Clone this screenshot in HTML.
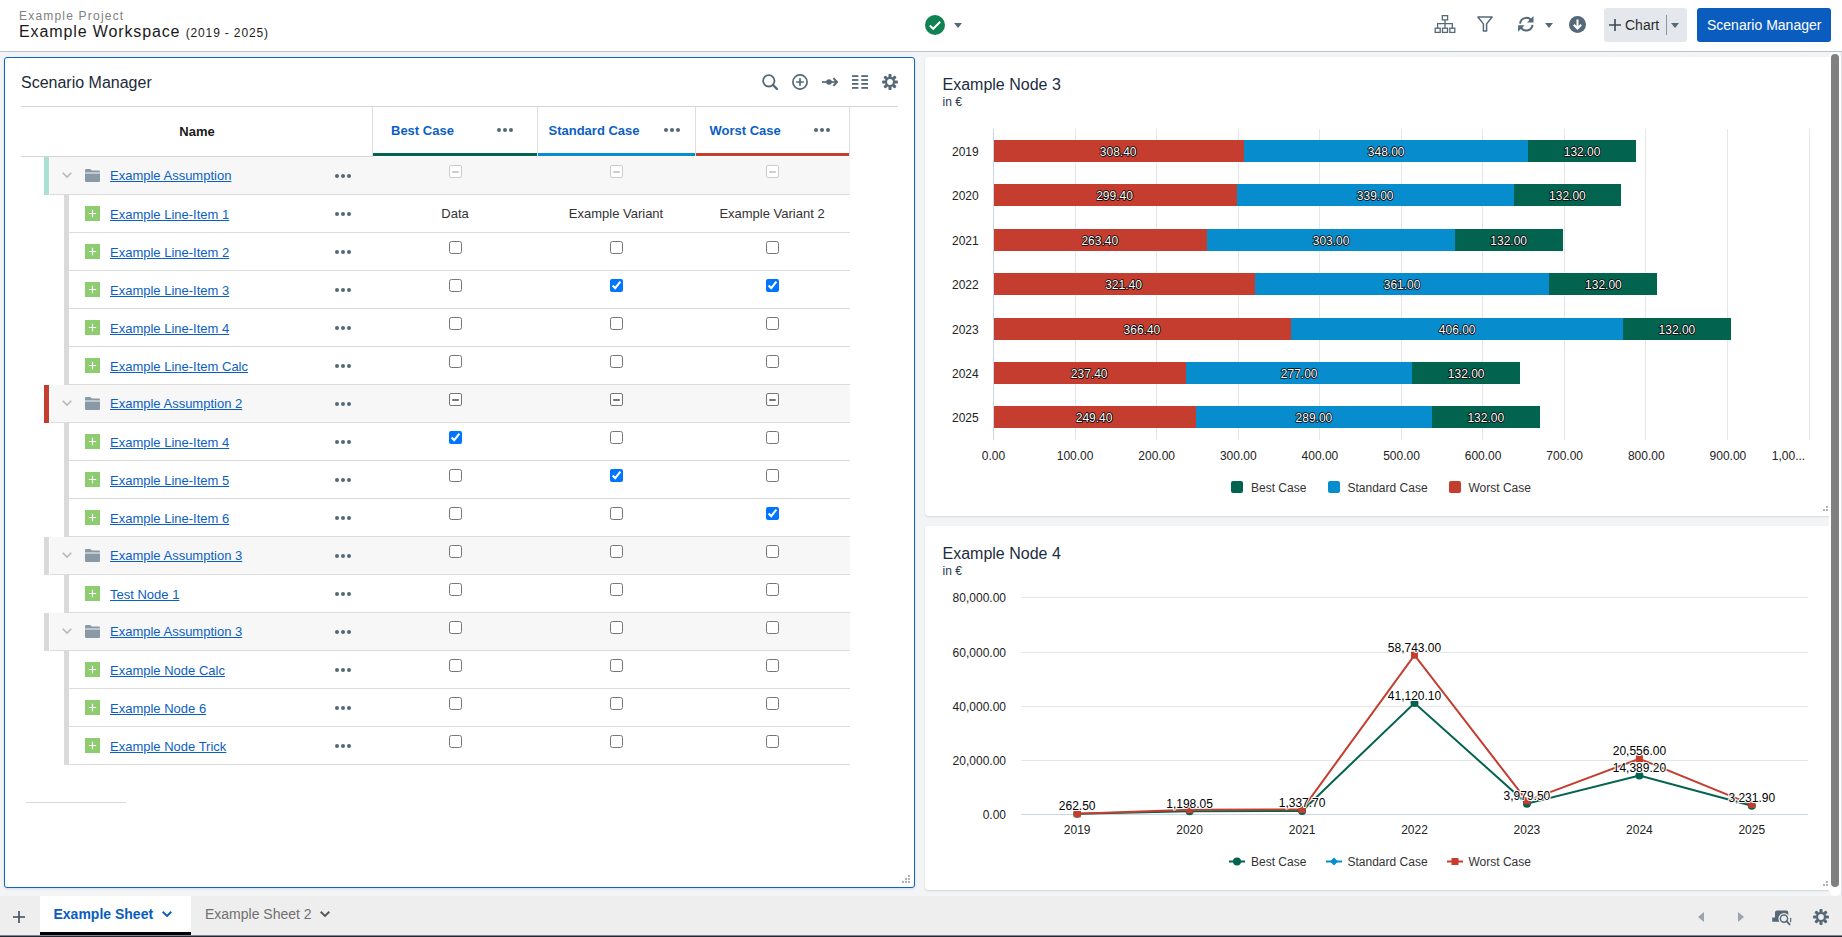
<!DOCTYPE html>
<html><head><meta charset="utf-8">
<style>
*{box-sizing:border-box}
html,body{margin:0;padding:0}
body{width:1842px;height:937px;overflow:hidden;position:relative;background:#f3f4f6;font-family:"Liberation Sans",sans-serif;color:#333}
.a{position:absolute}
.t{position:absolute;white-space:nowrap;line-height:1}
.lnk{color:#0b5fc4;text-decoration:underline;font-size:13px}
.dots{position:absolute;width:16px;height:4px}
.dots i{position:absolute;top:0;width:4px;height:4px;border-radius:50%;background:#546878}
.cb{position:absolute;margin:0;width:13px;height:13px}
.ind{position:absolute;width:13px;height:13px;border:1px solid #767676;border-radius:2px;background:#fff}
.ind:after{content:"";position:absolute;left:2px;top:4.5px;width:7px;height:2px;background:#767676;border-radius:1px}
.ind.dis{border-color:#cdcdcd}
.ind.dis:after{background:#cdcdcd}
svg{position:absolute;overflow:visible}
</style></head><body>

<div class="a" style="left:0;top:0;width:1842px;height:51px;background:#fff"></div>
<div class="a" style="left:0;top:51px;width:1842px;height:1px;background:#b9c2cb"></div>
<div class="t" style="left:19px;top:10px;font-size:12px;letter-spacing:1.2px;color:#808080">Example Project</div>
<div class="t" style="left:19px;top:24px;font-size:16px;letter-spacing:0.88px;color:#1a1a1a">Example Workspace <span style="font-size:12px;letter-spacing:0.85px">(2019 - 2025)</span></div>
<svg style="left:925px;top:15px" width="20" height="20" viewBox="0 0 20 20"><circle cx="10" cy="10" r="10" fill="#0e8250"/><path d="M4.8 10.6 L8.2 13.8 L15.2 6.8" stroke="#fff" stroke-width="2" fill="none"/></svg>
<svg style="left:954px;top:23px" width="8" height="5" viewBox="0 0 8 5"><path d="M0 0H8L4 5Z" fill="#546878"/></svg>
<svg style="left:1434px;top:15px" width="22" height="19" viewBox="0 0 22 19" fill="none" stroke="#546878" stroke-width="1.3"><rect x="8.3" y="0.65" width="5.3" height="4.2" /><path d="M11 4.9V13 M3.6 13V8.6H18.3V13"/><rect x="1.2" y="13.2" width="5" height="4.2"/><rect x="8.5" y="13.2" width="5" height="4.2"/><rect x="15.8" y="13.2" width="5" height="4.2"/></svg>
<svg style="left:1477px;top:16px" width="16" height="16" viewBox="0 0 16 16" fill="none" stroke="#546878" stroke-width="1.5" stroke-linejoin="round"><path d="M0.9 1H15.1L9.6 7.9V15H6.4V7.9Z"/></svg>
<svg style="left:1517px;top:15px" width="18" height="18" viewBox="0 0 18 18" fill="none" stroke="#546878" stroke-width="2"><path d="M3.1 8.6A6.2 6.2 0 0 1 14.4 5.6"/><path d="M15.5 9.9A6.2 6.2 0 0 1 4.2 12.8"/><path d="M16.5 1.1V7.6H10Z" fill="#546878" stroke="none"/><path d="M1.1 16.8V10.3H7.6Z" fill="#546878" stroke="none"/></svg>
<svg style="left:1545px;top:23px" width="8" height="5" viewBox="0 0 8 5"><path d="M0 0H8L4 5Z" fill="#546878"/></svg>
<svg style="left:1569px;top:16px" width="17" height="17" viewBox="0 0 17 17"><circle cx="8.5" cy="8.5" r="8.5" fill="#546878"/><path d="M8.5 3.5V12.5 M4.8 8.8L8.5 12.5L12.2 8.8" stroke="#fff" stroke-width="2" fill="none"/></svg>
<div class="a" style="left:1604px;top:8px;width:83px;height:34px;background:#e4e8ec;border-radius:3px"></div>
<svg style="left:1609px;top:19px" width="12" height="12" viewBox="0 0 12 12"><path d="M6 0V12M0 6H12" stroke="#3a4a58" stroke-width="1.6"/></svg>
<div class="t" style="left:1625px;top:17.5px;font-size:14px;color:#2b2b2b">Chart</div>
<div class="a" style="left:1666px;top:15px;width:1px;height:20px;background:#8a96a0"></div>
<svg style="left:1671px;top:23px" width="8" height="5" viewBox="0 0 8 5"><path d="M0 0H8L4 5Z" fill="#546878"/></svg>
<div class="a" style="left:1697px;top:8px;width:134px;height:34px;background:#0b5cbf;border-radius:3px"></div>
<div class="t" style="left:1707px;top:17.5px;font-size:14px;color:#fff">Scenario Manager</div>
<div class="a" style="left:4px;top:57px;width:911px;height:831px;background:#fff;border:1px solid #0d64c8;border-radius:3px;box-shadow:0 1px 3px rgba(0,0,0,0.10)"></div>
<div class="t" style="left:21px;top:75px;font-size:16px;color:#1b2a3a">Scenario Manager</div>
<svg style="left:762px;top:74px" width="16" height="16" viewBox="0 0 16 16" fill="none" stroke="#546878"><circle cx="6.8" cy="6.8" r="5.7" stroke-width="1.8"/><path d="M11 11L15 15" stroke-width="2.4" stroke-linecap="round"/></svg>
<svg style="left:792px;top:74px" width="16" height="16" viewBox="0 0 16 16" fill="none" stroke="#546878"><circle cx="8" cy="8" r="7.1" stroke-width="1.7"/><path d="M8 4.2V11.8M4.2 8H11.8" stroke-width="1.7"/></svg>
<svg style="left:822px;top:77px" width="16" height="10" viewBox="0 0 16 10" fill="none" stroke="#546878"><path d="M0 5H14" stroke-width="1.7"/><circle cx="7" cy="5" r="2.8" fill="#546878" stroke="none"/><path d="M11.4 1.1L15 5L11.4 8.9" stroke-width="2"/></svg>
<svg style="left:852px;top:75px" width="16" height="14" viewBox="0 0 16 14" fill="#546878"><rect x="0" y="0.2" width="6.4" height="1.8"/><rect x="9.3" y="0.2" width="6.7" height="1.8"/><rect x="0" y="4.1" width="6.4" height="1.8"/><rect x="9.3" y="4.1" width="6.7" height="1.8"/><rect x="0" y="8.0" width="6.4" height="1.8"/><rect x="9.3" y="8.0" width="6.7" height="1.8"/><rect x="0" y="12.0" width="6.4" height="1.8"/><rect x="9.3" y="12.0" width="6.7" height="1.8"/></svg>
<svg style="left:882px;top:74px" width="16" height="16" viewBox="0 0 16 16"><circle cx="8" cy="8" r="3.9" fill="none" stroke="#546878" stroke-width="2.0"/><rect x="6.45" y="0.1" width="3.1" height="4.4" rx="0.9" fill="#546878" transform="rotate(0 8 8)"/><rect x="6.45" y="0.1" width="3.1" height="4.4" rx="0.9" fill="#546878" transform="rotate(45 8 8)"/><rect x="6.45" y="0.1" width="3.1" height="4.4" rx="0.9" fill="#546878" transform="rotate(90 8 8)"/><rect x="6.45" y="0.1" width="3.1" height="4.4" rx="0.9" fill="#546878" transform="rotate(135 8 8)"/><rect x="6.45" y="0.1" width="3.1" height="4.4" rx="0.9" fill="#546878" transform="rotate(180 8 8)"/><rect x="6.45" y="0.1" width="3.1" height="4.4" rx="0.9" fill="#546878" transform="rotate(225 8 8)"/><rect x="6.45" y="0.1" width="3.1" height="4.4" rx="0.9" fill="#546878" transform="rotate(270 8 8)"/><rect x="6.45" y="0.1" width="3.1" height="4.4" rx="0.9" fill="#546878" transform="rotate(315 8 8)"/></svg>
<div class="a" style="left:21px;top:106px;width:877px;height:1px;background:#d5d5d5"></div>
<div class="a" style="left:21px;top:156px;width:352px;height:1px;background:#d5d5d5"></div>
<div class="a" style="left:372px;top:107px;width:1px;height:49px;background:#dedede"></div>
<div class="a" style="left:373px;top:153px;width:164px;height:3px;background:#02634f"></div>
<div class="t" style="left:391px;top:124px;font-size:13px;font-weight:bold;color:#0b5fc4">Best Case</div>
<div class="dots" style="left:497px;top:128px"><i style="left:0"></i><i style="left:6px"></i><i style="left:12px"></i></div>
<div class="a" style="left:537px;top:107px;width:1px;height:49px;background:#dedede"></div>
<div class="a" style="left:538px;top:153px;width:157px;height:3px;background:#078ccd"></div>
<div class="t" style="left:548.5px;top:124px;font-size:13px;font-weight:bold;color:#0b5fc4">Standard Case</div>
<div class="dots" style="left:664px;top:128px"><i style="left:0"></i><i style="left:6px"></i><i style="left:12px"></i></div>
<div class="a" style="left:695px;top:107px;width:1px;height:49px;background:#dedede"></div>
<div class="a" style="left:696px;top:153px;width:153px;height:3px;background:#c43d2e"></div>
<div class="t" style="left:709.5px;top:124px;font-size:13px;font-weight:bold;color:#0b5fc4">Worst Case</div>
<div class="dots" style="left:814px;top:128px"><i style="left:0"></i><i style="left:6px"></i><i style="left:12px"></i></div>
<div class="a" style="left:849px;top:107px;width:1px;height:49px;background:#dedede"></div>
<div class="t" style="left:179.3px;top:125px;font-size:13px;font-weight:bold;color:#1a1a1a">Name</div>
<div class="a" style="left:50px;top:157px;width:800px;height:37px;background:#f7f7f7"></div>
<div class="a" style="left:44px;top:157px;width:5px;height:38px;background:#abe0d6"></div>
<div class="a" style="left:50px;top:194px;width:800px;height:1px;background:#dcdcdc"></div>
<svg style="left:62px;top:172px" width="10" height="6" viewBox="0 0 10 6"><path d="M0.7 0.7L5 5L9.3 0.7" stroke="#b9b9b9" stroke-width="1.6" fill="none"/></svg>
<svg style="left:85px;top:169px" width="15" height="13" viewBox="0 0 15 13"><path d="M0 1.2Q0 0 1.2 0H5.2L6.8 1.6H13.8Q15 1.6 15 2.8V3.4H0Z M0 4.6H15V11.8Q15 13 13.8 13H1.2Q0 13 0 11.8Z" fill="#8999a6"/></svg>
<div class="t lnk" style="left:110px;top:168.6px">Example Assumption</div>
<div class="dots" style="left:335px;top:174px"><i style="left:0"></i><i style="left:6px"></i><i style="left:12px"></i></div>
<div class="ind dis" style="left:449px;top:165px"></div>
<div class="ind dis" style="left:610px;top:165px"></div>
<div class="ind dis" style="left:766px;top:165px"></div>
<div class="a" style="left:64px;top:195px;width:5px;height:38px;background:#dadada"></div>
<div class="a" style="left:69px;top:232px;width:781px;height:1px;background:#dcdcdc"></div>
<div class="a" style="left:85px;top:206px;width:15px;height:15px;background:#8dcd70"></div>
<svg style="left:85px;top:206px" width="15" height="15" viewBox="0 0 15 15"><path d="M7.5 3.8V11.2M3.8 7.5H11.2" stroke="#fff" stroke-width="1.2"/></svg>
<div class="t lnk" style="left:110px;top:208.2px">Example Line-Item 1</div>
<div class="dots" style="left:335px;top:212px"><i style="left:0"></i><i style="left:6px"></i><i style="left:12px"></i></div>
<div class="t" style="left:455px;top:206.8px;width:0;font-size:13px;color:#333;display:flex;justify-content:center">Data</div>
<div class="t" style="left:616px;top:206.8px;width:0;font-size:13px;color:#333;display:flex;justify-content:center">Example Variant</div>
<div class="t" style="left:772px;top:206.8px;width:0;font-size:13px;color:#333;display:flex;justify-content:center">Example Variant 2</div>
<div class="a" style="left:64px;top:233px;width:5px;height:38px;background:#dadada"></div>
<div class="a" style="left:69px;top:270px;width:781px;height:1px;background:#dcdcdc"></div>
<div class="a" style="left:85px;top:244px;width:15px;height:15px;background:#8dcd70"></div>
<svg style="left:85px;top:244px" width="15" height="15" viewBox="0 0 15 15"><path d="M7.5 3.8V11.2M3.8 7.5H11.2" stroke="#fff" stroke-width="1.2"/></svg>
<div class="t lnk" style="left:110px;top:246.2px">Example Line-Item 2</div>
<div class="dots" style="left:335px;top:250px"><i style="left:0"></i><i style="left:6px"></i><i style="left:12px"></i></div>
<input type="checkbox" class="cb" style="left:449px;top:241px">
<input type="checkbox" class="cb" style="left:610px;top:241px">
<input type="checkbox" class="cb" style="left:766px;top:241px">
<div class="a" style="left:64px;top:271px;width:5px;height:38px;background:#dadada"></div>
<div class="a" style="left:69px;top:308px;width:781px;height:1px;background:#dcdcdc"></div>
<div class="a" style="left:85px;top:282px;width:15px;height:15px;background:#8dcd70"></div>
<svg style="left:85px;top:282px" width="15" height="15" viewBox="0 0 15 15"><path d="M7.5 3.8V11.2M3.8 7.5H11.2" stroke="#fff" stroke-width="1.2"/></svg>
<div class="t lnk" style="left:110px;top:284.2px">Example Line-Item 3</div>
<div class="dots" style="left:335px;top:288px"><i style="left:0"></i><i style="left:6px"></i><i style="left:12px"></i></div>
<input type="checkbox" class="cb" style="left:449px;top:279px">
<input type="checkbox" class="cb" style="left:610px;top:279px" checked>
<input type="checkbox" class="cb" style="left:766px;top:279px" checked>
<div class="a" style="left:64px;top:309px;width:5px;height:38px;background:#dadada"></div>
<div class="a" style="left:69px;top:346px;width:781px;height:1px;background:#dcdcdc"></div>
<div class="a" style="left:85px;top:320px;width:15px;height:15px;background:#8dcd70"></div>
<svg style="left:85px;top:320px" width="15" height="15" viewBox="0 0 15 15"><path d="M7.5 3.8V11.2M3.8 7.5H11.2" stroke="#fff" stroke-width="1.2"/></svg>
<div class="t lnk" style="left:110px;top:322.2px">Example Line-Item 4</div>
<div class="dots" style="left:335px;top:326px"><i style="left:0"></i><i style="left:6px"></i><i style="left:12px"></i></div>
<input type="checkbox" class="cb" style="left:449px;top:317px">
<input type="checkbox" class="cb" style="left:610px;top:317px">
<input type="checkbox" class="cb" style="left:766px;top:317px">
<div class="a" style="left:64px;top:347px;width:5px;height:38px;background:#dadada"></div>
<div class="a" style="left:69px;top:384px;width:781px;height:1px;background:#dcdcdc"></div>
<div class="a" style="left:85px;top:358px;width:15px;height:15px;background:#8dcd70"></div>
<svg style="left:85px;top:358px" width="15" height="15" viewBox="0 0 15 15"><path d="M7.5 3.8V11.2M3.8 7.5H11.2" stroke="#fff" stroke-width="1.2"/></svg>
<div class="t lnk" style="left:110px;top:360.2px">Example Line-Item Calc</div>
<div class="dots" style="left:335px;top:364px"><i style="left:0"></i><i style="left:6px"></i><i style="left:12px"></i></div>
<input type="checkbox" class="cb" style="left:449px;top:355px">
<input type="checkbox" class="cb" style="left:610px;top:355px">
<input type="checkbox" class="cb" style="left:766px;top:355px">
<div class="a" style="left:50px;top:385px;width:800px;height:37px;background:#f7f7f7"></div>
<div class="a" style="left:44px;top:385px;width:5px;height:38px;background:#c43d2e"></div>
<div class="a" style="left:50px;top:422px;width:800px;height:1px;background:#dcdcdc"></div>
<svg style="left:62px;top:400px" width="10" height="6" viewBox="0 0 10 6"><path d="M0.7 0.7L5 5L9.3 0.7" stroke="#b9b9b9" stroke-width="1.6" fill="none"/></svg>
<svg style="left:85px;top:397px" width="15" height="13" viewBox="0 0 15 13"><path d="M0 1.2Q0 0 1.2 0H5.2L6.8 1.6H13.8Q15 1.6 15 2.8V3.4H0Z M0 4.6H15V11.8Q15 13 13.8 13H1.2Q0 13 0 11.8Z" fill="#8999a6"/></svg>
<div class="t lnk" style="left:110px;top:396.6px">Example Assumption 2</div>
<div class="dots" style="left:335px;top:402px"><i style="left:0"></i><i style="left:6px"></i><i style="left:12px"></i></div>
<div class="ind" style="left:449px;top:393px"></div>
<div class="ind" style="left:610px;top:393px"></div>
<div class="ind" style="left:766px;top:393px"></div>
<div class="a" style="left:64px;top:423px;width:5px;height:38px;background:#dadada"></div>
<div class="a" style="left:69px;top:460px;width:781px;height:1px;background:#dcdcdc"></div>
<div class="a" style="left:85px;top:434px;width:15px;height:15px;background:#8dcd70"></div>
<svg style="left:85px;top:434px" width="15" height="15" viewBox="0 0 15 15"><path d="M7.5 3.8V11.2M3.8 7.5H11.2" stroke="#fff" stroke-width="1.2"/></svg>
<div class="t lnk" style="left:110px;top:436.2px">Example Line-Item 4</div>
<div class="dots" style="left:335px;top:440px"><i style="left:0"></i><i style="left:6px"></i><i style="left:12px"></i></div>
<input type="checkbox" class="cb" style="left:449px;top:431px" checked>
<input type="checkbox" class="cb" style="left:610px;top:431px">
<input type="checkbox" class="cb" style="left:766px;top:431px">
<div class="a" style="left:64px;top:461px;width:5px;height:38px;background:#dadada"></div>
<div class="a" style="left:69px;top:498px;width:781px;height:1px;background:#dcdcdc"></div>
<div class="a" style="left:85px;top:472px;width:15px;height:15px;background:#8dcd70"></div>
<svg style="left:85px;top:472px" width="15" height="15" viewBox="0 0 15 15"><path d="M7.5 3.8V11.2M3.8 7.5H11.2" stroke="#fff" stroke-width="1.2"/></svg>
<div class="t lnk" style="left:110px;top:474.2px">Example Line-Item 5</div>
<div class="dots" style="left:335px;top:478px"><i style="left:0"></i><i style="left:6px"></i><i style="left:12px"></i></div>
<input type="checkbox" class="cb" style="left:449px;top:469px">
<input type="checkbox" class="cb" style="left:610px;top:469px" checked>
<input type="checkbox" class="cb" style="left:766px;top:469px">
<div class="a" style="left:64px;top:499px;width:5px;height:38px;background:#dadada"></div>
<div class="a" style="left:69px;top:536px;width:781px;height:1px;background:#dcdcdc"></div>
<div class="a" style="left:85px;top:510px;width:15px;height:15px;background:#8dcd70"></div>
<svg style="left:85px;top:510px" width="15" height="15" viewBox="0 0 15 15"><path d="M7.5 3.8V11.2M3.8 7.5H11.2" stroke="#fff" stroke-width="1.2"/></svg>
<div class="t lnk" style="left:110px;top:512.2px">Example Line-Item 6</div>
<div class="dots" style="left:335px;top:516px"><i style="left:0"></i><i style="left:6px"></i><i style="left:12px"></i></div>
<input type="checkbox" class="cb" style="left:449px;top:507px">
<input type="checkbox" class="cb" style="left:610px;top:507px">
<input type="checkbox" class="cb" style="left:766px;top:507px" checked>
<div class="a" style="left:50px;top:537px;width:800px;height:37px;background:#f7f7f7"></div>
<div class="a" style="left:44px;top:537px;width:5px;height:38px;background:#d9d9d9"></div>
<div class="a" style="left:50px;top:574px;width:800px;height:1px;background:#dcdcdc"></div>
<svg style="left:62px;top:552px" width="10" height="6" viewBox="0 0 10 6"><path d="M0.7 0.7L5 5L9.3 0.7" stroke="#b9b9b9" stroke-width="1.6" fill="none"/></svg>
<svg style="left:85px;top:549px" width="15" height="13" viewBox="0 0 15 13"><path d="M0 1.2Q0 0 1.2 0H5.2L6.8 1.6H13.8Q15 1.6 15 2.8V3.4H0Z M0 4.6H15V11.8Q15 13 13.8 13H1.2Q0 13 0 11.8Z" fill="#8999a6"/></svg>
<div class="t lnk" style="left:110px;top:548.6px">Example Assumption 3</div>
<div class="dots" style="left:335px;top:554px"><i style="left:0"></i><i style="left:6px"></i><i style="left:12px"></i></div>
<input type="checkbox" class="cb" style="left:449px;top:545px">
<input type="checkbox" class="cb" style="left:610px;top:545px">
<input type="checkbox" class="cb" style="left:766px;top:545px">
<div class="a" style="left:64px;top:575px;width:5px;height:38px;background:#dadada"></div>
<div class="a" style="left:69px;top:612px;width:781px;height:1px;background:#dcdcdc"></div>
<div class="a" style="left:85px;top:586px;width:15px;height:15px;background:#8dcd70"></div>
<svg style="left:85px;top:586px" width="15" height="15" viewBox="0 0 15 15"><path d="M7.5 3.8V11.2M3.8 7.5H11.2" stroke="#fff" stroke-width="1.2"/></svg>
<div class="t lnk" style="left:110px;top:588.2px">Test Node 1</div>
<div class="dots" style="left:335px;top:592px"><i style="left:0"></i><i style="left:6px"></i><i style="left:12px"></i></div>
<input type="checkbox" class="cb" style="left:449px;top:583px">
<input type="checkbox" class="cb" style="left:610px;top:583px">
<input type="checkbox" class="cb" style="left:766px;top:583px">
<div class="a" style="left:50px;top:613px;width:800px;height:37px;background:#f7f7f7"></div>
<div class="a" style="left:44px;top:613px;width:5px;height:38px;background:#d9d9d9"></div>
<div class="a" style="left:50px;top:650px;width:800px;height:1px;background:#dcdcdc"></div>
<svg style="left:62px;top:628px" width="10" height="6" viewBox="0 0 10 6"><path d="M0.7 0.7L5 5L9.3 0.7" stroke="#b9b9b9" stroke-width="1.6" fill="none"/></svg>
<svg style="left:85px;top:625px" width="15" height="13" viewBox="0 0 15 13"><path d="M0 1.2Q0 0 1.2 0H5.2L6.8 1.6H13.8Q15 1.6 15 2.8V3.4H0Z M0 4.6H15V11.8Q15 13 13.8 13H1.2Q0 13 0 11.8Z" fill="#8999a6"/></svg>
<div class="t lnk" style="left:110px;top:624.6px">Example Assumption 3</div>
<div class="dots" style="left:335px;top:630px"><i style="left:0"></i><i style="left:6px"></i><i style="left:12px"></i></div>
<input type="checkbox" class="cb" style="left:449px;top:621px">
<input type="checkbox" class="cb" style="left:610px;top:621px">
<input type="checkbox" class="cb" style="left:766px;top:621px">
<div class="a" style="left:64px;top:651px;width:5px;height:38px;background:#dadada"></div>
<div class="a" style="left:69px;top:688px;width:781px;height:1px;background:#dcdcdc"></div>
<div class="a" style="left:85px;top:662px;width:15px;height:15px;background:#8dcd70"></div>
<svg style="left:85px;top:662px" width="15" height="15" viewBox="0 0 15 15"><path d="M7.5 3.8V11.2M3.8 7.5H11.2" stroke="#fff" stroke-width="1.2"/></svg>
<div class="t lnk" style="left:110px;top:664.2px">Example Node Calc</div>
<div class="dots" style="left:335px;top:668px"><i style="left:0"></i><i style="left:6px"></i><i style="left:12px"></i></div>
<input type="checkbox" class="cb" style="left:449px;top:659px">
<input type="checkbox" class="cb" style="left:610px;top:659px">
<input type="checkbox" class="cb" style="left:766px;top:659px">
<div class="a" style="left:64px;top:689px;width:5px;height:38px;background:#dadada"></div>
<div class="a" style="left:69px;top:726px;width:781px;height:1px;background:#dcdcdc"></div>
<div class="a" style="left:85px;top:700px;width:15px;height:15px;background:#8dcd70"></div>
<svg style="left:85px;top:700px" width="15" height="15" viewBox="0 0 15 15"><path d="M7.5 3.8V11.2M3.8 7.5H11.2" stroke="#fff" stroke-width="1.2"/></svg>
<div class="t lnk" style="left:110px;top:702.2px">Example Node 6</div>
<div class="dots" style="left:335px;top:706px"><i style="left:0"></i><i style="left:6px"></i><i style="left:12px"></i></div>
<input type="checkbox" class="cb" style="left:449px;top:697px">
<input type="checkbox" class="cb" style="left:610px;top:697px">
<input type="checkbox" class="cb" style="left:766px;top:697px">
<div class="a" style="left:64px;top:727px;width:5px;height:38px;background:#dadada"></div>
<div class="a" style="left:69px;top:764px;width:781px;height:1px;background:#dcdcdc"></div>
<div class="a" style="left:85px;top:738px;width:15px;height:15px;background:#8dcd70"></div>
<svg style="left:85px;top:738px" width="15" height="15" viewBox="0 0 15 15"><path d="M7.5 3.8V11.2M3.8 7.5H11.2" stroke="#fff" stroke-width="1.2"/></svg>
<div class="t lnk" style="left:110px;top:740.2px">Example Node Trick</div>
<div class="dots" style="left:335px;top:744px"><i style="left:0"></i><i style="left:6px"></i><i style="left:12px"></i></div>
<input type="checkbox" class="cb" style="left:449px;top:735px">
<input type="checkbox" class="cb" style="left:610px;top:735px">
<input type="checkbox" class="cb" style="left:766px;top:735px">
<div class="a" style="left:26px;top:802px;width:100px;height:1px;background:#d8d8d8"></div>
<div class="a" style="left:902px;top:881px;width:2px;height:2px;background:#b3b3b3"></div><div class="a" style="left:905px;top:881px;width:2px;height:2px;background:#b3b3b3"></div><div class="a" style="left:908px;top:881px;width:2px;height:2px;background:#b3b3b3"></div><div class="a" style="left:905px;top:878px;width:2px;height:2px;background:#b3b3b3"></div><div class="a" style="left:908px;top:878px;width:2px;height:2px;background:#b3b3b3"></div><div class="a" style="left:908px;top:875px;width:2px;height:2px;background:#b3b3b3"></div>
<div class="a" style="left:925px;top:57px;width:912px;height:459px;background:#fff;border-radius:4px;box-shadow:0 1px 2px rgba(0,0,0,0.12)"></div>
<div class="a" style="left:925px;top:526px;width:912px;height:364px;background:#fff;border-radius:4px;box-shadow:0 1px 2px rgba(0,0,0,0.12)"></div>
<div class="a" style="left:1826px;top:506px;width:2px;height:2px;background:#b3b3b3"></div><div class="a" style="left:1823px;top:509px;width:2px;height:2px;background:#b3b3b3"></div><div class="a" style="left:1826px;top:509px;width:2px;height:2px;background:#b3b3b3"></div>
<div class="a" style="left:1826px;top:881px;width:2px;height:2px;background:#b3b3b3"></div><div class="a" style="left:1823px;top:884px;width:2px;height:2px;background:#b3b3b3"></div><div class="a" style="left:1826px;top:884px;width:2px;height:2px;background:#b3b3b3"></div>
<div class="t" style="left:942.5px;top:77.4px;font-size:16px;color:#1c2d40">Example Node 3</div>
<div class="t" style="left:942.5px;top:95.6px;font-size:12px;color:#2a3a4a">in €</div>
<div class="t" style="left:942.5px;top:546.4px;font-size:16px;color:#1c2d40">Example Node 4</div>
<div class="t" style="left:942.5px;top:565.2px;font-size:12px;color:#2a3a4a">in €</div>
<svg style="left:0;top:0" width="1842" height="937" viewBox="0 0 1842 937" font-family="Liberation Sans" font-size="12"><path d="M1075.5 129V440" stroke="#e6e6e6" stroke-width="1"/><path d="M1156.5 129V440" stroke="#e6e6e6" stroke-width="1"/><path d="M1238.5 129V440" stroke="#e6e6e6" stroke-width="1"/><path d="M1319.5 129V440" stroke="#e6e6e6" stroke-width="1"/><path d="M1401.5 129V440" stroke="#e6e6e6" stroke-width="1"/><path d="M1482.5 129V440" stroke="#e6e6e6" stroke-width="1"/><path d="M1564.5 129V440" stroke="#e6e6e6" stroke-width="1"/><path d="M1645.5 129V440" stroke="#e6e6e6" stroke-width="1"/><path d="M1727.5 129V440" stroke="#e6e6e6" stroke-width="1"/><path d="M1809.5 129V440" stroke="#e6e6e6" stroke-width="1"/><path d="M993.5 129V440" stroke="#ccd6eb" stroke-width="1"/><rect x="994" y="140" width="250" height="22" fill="#c43d2e"/><rect x="1244" y="140" width="284" height="22" fill="#078ccd"/><rect x="1528" y="140" width="108" height="22" fill="#02634f"/><text x="1118.2" y="156.3" text-anchor="middle" fill="#fff" stroke="#000" stroke-width="1.5" stroke-linejoin="round" paint-order="stroke">308.40</text><text x="1386.2" y="156.3" text-anchor="middle" fill="#fff" stroke="#000" stroke-width="1.5" stroke-linejoin="round" paint-order="stroke">348.00</text><text x="1582.1" y="156.3" text-anchor="middle" fill="#fff" stroke="#000" stroke-width="1.5" stroke-linejoin="round" paint-order="stroke">132.00</text><text x="978.7" y="155.7" text-anchor="end" fill="#222">2019</text><rect x="994" y="184" width="243" height="22" fill="#c43d2e"/><rect x="1237" y="184" width="277" height="22" fill="#078ccd"/><rect x="1514" y="184" width="107" height="22" fill="#02634f"/><text x="1114.5" y="200.3" text-anchor="middle" fill="#fff" stroke="#000" stroke-width="1.5" stroke-linejoin="round" paint-order="stroke">299.40</text><text x="1375.2" y="200.3" text-anchor="middle" fill="#fff" stroke="#000" stroke-width="1.5" stroke-linejoin="round" paint-order="stroke">339.00</text><text x="1567.4" y="200.3" text-anchor="middle" fill="#fff" stroke="#000" stroke-width="1.5" stroke-linejoin="round" paint-order="stroke">132.00</text><text x="978.7" y="199.7" text-anchor="end" fill="#222">2020</text><rect x="994" y="229" width="213" height="22" fill="#c43d2e"/><rect x="1207" y="229" width="248" height="22" fill="#078ccd"/><rect x="1455" y="229" width="108" height="22" fill="#02634f"/><text x="1099.8" y="245.3" text-anchor="middle" fill="#fff" stroke="#000" stroke-width="1.5" stroke-linejoin="round" paint-order="stroke">263.40</text><text x="1331.1" y="245.3" text-anchor="middle" fill="#fff" stroke="#000" stroke-width="1.5" stroke-linejoin="round" paint-order="stroke">303.00</text><text x="1508.7" y="245.3" text-anchor="middle" fill="#fff" stroke="#000" stroke-width="1.5" stroke-linejoin="round" paint-order="stroke">132.00</text><text x="978.7" y="244.7" text-anchor="end" fill="#222">2021</text><rect x="994" y="273" width="261" height="22" fill="#c43d2e"/><rect x="1255" y="273" width="294" height="22" fill="#078ccd"/><rect x="1549" y="273" width="108" height="22" fill="#02634f"/><text x="1123.5" y="289.3" text-anchor="middle" fill="#fff" stroke="#000" stroke-width="1.5" stroke-linejoin="round" paint-order="stroke">321.40</text><text x="1402.1" y="289.3" text-anchor="middle" fill="#fff" stroke="#000" stroke-width="1.5" stroke-linejoin="round" paint-order="stroke">361.00</text><text x="1603.4" y="289.3" text-anchor="middle" fill="#fff" stroke="#000" stroke-width="1.5" stroke-linejoin="round" paint-order="stroke">132.00</text><text x="978.7" y="288.7" text-anchor="end" fill="#222">2022</text><rect x="994" y="318" width="297" height="22" fill="#c43d2e"/><rect x="1291" y="318" width="332" height="22" fill="#078ccd"/><rect x="1623" y="318" width="108" height="22" fill="#02634f"/><text x="1141.9" y="334.3" text-anchor="middle" fill="#fff" stroke="#000" stroke-width="1.5" stroke-linejoin="round" paint-order="stroke">366.40</text><text x="1457.2" y="334.3" text-anchor="middle" fill="#fff" stroke="#000" stroke-width="1.5" stroke-linejoin="round" paint-order="stroke">406.00</text><text x="1676.9" y="334.3" text-anchor="middle" fill="#fff" stroke="#000" stroke-width="1.5" stroke-linejoin="round" paint-order="stroke">132.00</text><text x="978.7" y="333.7" text-anchor="end" fill="#222">2023</text><rect x="994" y="362" width="192" height="22" fill="#c43d2e"/><rect x="1186" y="362" width="226" height="22" fill="#078ccd"/><rect x="1412" y="362" width="108" height="22" fill="#02634f"/><text x="1089.2" y="378.3" text-anchor="middle" fill="#fff" stroke="#000" stroke-width="1.5" stroke-linejoin="round" paint-order="stroke">237.40</text><text x="1299.2" y="378.3" text-anchor="middle" fill="#fff" stroke="#000" stroke-width="1.5" stroke-linejoin="round" paint-order="stroke">277.00</text><text x="1466.2" y="378.3" text-anchor="middle" fill="#fff" stroke="#000" stroke-width="1.5" stroke-linejoin="round" paint-order="stroke">132.00</text><text x="978.7" y="377.7" text-anchor="end" fill="#222">2024</text><rect x="994" y="406" width="202" height="22" fill="#c43d2e"/><rect x="1196" y="406" width="236" height="22" fill="#078ccd"/><rect x="1432" y="406" width="108" height="22" fill="#02634f"/><text x="1094.1" y="422.3" text-anchor="middle" fill="#fff" stroke="#000" stroke-width="1.5" stroke-linejoin="round" paint-order="stroke">249.40</text><text x="1313.9" y="422.3" text-anchor="middle" fill="#fff" stroke="#000" stroke-width="1.5" stroke-linejoin="round" paint-order="stroke">289.00</text><text x="1485.8" y="422.3" text-anchor="middle" fill="#fff" stroke="#000" stroke-width="1.5" stroke-linejoin="round" paint-order="stroke">132.00</text><text x="978.7" y="421.7" text-anchor="end" fill="#222">2025</text><text x="993.5" y="459.8" text-anchor="middle" fill="#222">0.00</text><text x="1075.1" y="459.8" text-anchor="middle" fill="#222">100.00</text><text x="1156.7" y="459.8" text-anchor="middle" fill="#222">200.00</text><text x="1238.3" y="459.8" text-anchor="middle" fill="#222">300.00</text><text x="1319.9" y="459.8" text-anchor="middle" fill="#222">400.00</text><text x="1401.5" y="459.8" text-anchor="middle" fill="#222">500.00</text><text x="1483.1" y="459.8" text-anchor="middle" fill="#222">600.00</text><text x="1564.7" y="459.8" text-anchor="middle" fill="#222">700.00</text><text x="1646.3" y="459.8" text-anchor="middle" fill="#222">800.00</text><text x="1727.9" y="459.8" text-anchor="middle" fill="#222">900.00</text><text x="1805.2" y="459.8" text-anchor="end" fill="#222">1,00...</text><rect x="1231" y="481" width="12" height="12" rx="2" fill="#02634f"/><text x="1251" y="491.8" fill="#333">Best Case</text><rect x="1328" y="481" width="12" height="12" rx="2" fill="#078ccd"/><text x="1347.5" y="491.8" fill="#333">Standard Case</text><rect x="1449" y="481" width="12" height="12" rx="2" fill="#c43d2e"/><text x="1468.5" y="491.8" fill="#333">Worst Case</text><text x="1006" y="819.2" text-anchor="end" fill="#222">0.00</text><path d="M1021 760.5H1808" stroke="#e6e6e6"/><text x="1006" y="765.2" text-anchor="end" fill="#222">20,000.00</text><path d="M1021 706.5H1808" stroke="#e6e6e6"/><text x="1006" y="711.2" text-anchor="end" fill="#222">40,000.00</text><path d="M1021 652.5H1808" stroke="#e6e6e6"/><text x="1006" y="657.2" text-anchor="end" fill="#222">60,000.00</text><path d="M1021 597.5H1808" stroke="#e6e6e6"/><text x="1006" y="602.2" text-anchor="end" fill="#222">80,000.00</text><path d="M1021 814.5H1808" stroke="#ccd6eb"/><text x="1077.2" y="834" text-anchor="middle" fill="#222">2019</text><text x="1189.6" y="834" text-anchor="middle" fill="#222">2020</text><text x="1302.1" y="834" text-anchor="middle" fill="#222">2021</text><text x="1414.5" y="834" text-anchor="middle" fill="#222">2022</text><text x="1526.9" y="834" text-anchor="middle" fill="#222">2023</text><text x="1639.4" y="834" text-anchor="middle" fill="#222">2024</text><text x="1751.8" y="834" text-anchor="middle" fill="#222">2025</text><polyline points="1077.2,813.8 1189.6,811.3 1302.1,810.9 1414.5,703.0 1526.9,803.7 1639.4,775.5 1751.8,805.7" fill="none" stroke="#02634f" stroke-width="2"/><circle cx="1077.2" cy="813.8" r="4" fill="#02634f"/><circle cx="1189.6" cy="811.3" r="4" fill="#02634f"/><circle cx="1302.1" cy="810.9" r="4" fill="#02634f"/><circle cx="1414.5" cy="703.0" r="4" fill="#02634f"/><circle cx="1526.9" cy="803.7" r="4" fill="#02634f"/><circle cx="1639.4" cy="775.5" r="4" fill="#02634f"/><circle cx="1751.8" cy="805.7" r="4" fill="#02634f"/><polyline points="1077.2,813.8 1189.6,809.8 1302.1,809.5 1414.5,655.2 1526.9,800.9 1639.4,758.7 1751.8,804.6" fill="none" stroke="#c43d2e" stroke-width="2"/><rect x="1073.7" y="810.3" width="7" height="7" fill="#c43d2e"/><rect x="1186.1" y="806.3" width="7" height="7" fill="#c43d2e"/><rect x="1298.6" y="806.0" width="7" height="7" fill="#c43d2e"/><rect x="1411.0" y="651.7" width="7" height="7" fill="#c43d2e"/><rect x="1523.4" y="797.4" width="7" height="7" fill="#c43d2e"/><rect x="1635.9" y="755.2" width="7" height="7" fill="#c43d2e"/><rect x="1748.3" y="801.1" width="7" height="7" fill="#c43d2e"/><text x="1077.2" y="810.2" text-anchor="middle" fill="#000" stroke="#fff" stroke-width="2" stroke-linejoin="round" paint-order="stroke">262.50</text><text x="1189.6" y="807.9" text-anchor="middle" fill="#000" stroke="#fff" stroke-width="2" stroke-linejoin="round" paint-order="stroke">1,198.05</text><text x="1302.1" y="806.5" text-anchor="middle" fill="#000" stroke="#fff" stroke-width="2" stroke-linejoin="round" paint-order="stroke">1,337.70</text><text x="1414.5" y="651.6" text-anchor="middle" fill="#000" stroke="#fff" stroke-width="2" stroke-linejoin="round" paint-order="stroke">58,743.00</text><text x="1414.5" y="699.6" text-anchor="middle" fill="#000" stroke="#fff" stroke-width="2" stroke-linejoin="round" paint-order="stroke">41,120.10</text><text x="1526.9" y="800.0" text-anchor="middle" fill="#000" stroke="#fff" stroke-width="2" stroke-linejoin="round" paint-order="stroke">3,979.50</text><text x="1639.4" y="755.0" text-anchor="middle" fill="#000" stroke="#fff" stroke-width="2" stroke-linejoin="round" paint-order="stroke">20,556.00</text><text x="1639.4" y="772.0" text-anchor="middle" fill="#000" stroke="#fff" stroke-width="2" stroke-linejoin="round" paint-order="stroke">14,389.20</text><text x="1751.8" y="802.0" text-anchor="middle" fill="#000" stroke="#fff" stroke-width="2" stroke-linejoin="round" paint-order="stroke">3,231.90</text><path d="M1229 861.5H1245" stroke="#02634f" stroke-width="2"/><circle cx="1237" cy="861.5" r="4" fill="#02634f"/><text x="1251" y="865.8" fill="#333">Best Case</text><path d="M1326 861.5H1342" stroke="#078ccd" stroke-width="2"/><path d="M1334 857.5L1338 861.5L1334 865.5L1330 861.5Z" fill="#078ccd"/><text x="1347.5" y="865.8" fill="#333">Standard Case</text><path d="M1447 861.5H1463" stroke="#c43d2e" stroke-width="2"/><rect x="1451.5" y="858" width="7" height="7" fill="#c43d2e"/><text x="1468.5" y="865.8" fill="#333">Worst Case</text></svg>
<div class="a" style="left:1829px;top:52px;width:12px;height:844px;background:#fff;border-radius:6px"></div>
<div class="a" style="left:1831px;top:54px;width:8px;height:833px;background:#808080;border-radius:4px"></div>
<div class="a" style="left:1841px;top:52px;width:1px;height:885px;background:#dfe2e6"></div>
<div class="a" style="left:0;top:896px;width:1842px;height:41px;background:#eeeeee"></div>
<div class="a" style="left:0;top:935px;width:1842px;height:1px;background:#7d848c"></div>
<div class="a" style="left:0;top:936px;width:1842px;height:1px;background:#1f2a36"></div>
<div class="a" style="left:40px;top:896px;width:151px;height:36px;background:#fff"></div>
<div class="a" style="left:40px;top:932px;width:151px;height:3px;background:#000"></div>
<svg style="left:13px;top:911px" width="12" height="12" viewBox="0 0 12 12"><path d="M6 0V12M0 6H12" stroke="#3d4d5c" stroke-width="1.6"/></svg>
<div class="t" style="left:53.5px;top:907.2px;font-size:14px;font-weight:bold;color:#0b5cbf">Example Sheet</div>
<svg style="left:162px;top:911px" width="10" height="6" viewBox="0 0 10 6"><path d="M0.7 0.8L5 5L9.3 0.8" stroke="#0b5cbf" stroke-width="1.9" fill="none"/></svg>
<div class="t" style="left:205px;top:907.2px;font-size:14px;color:#707070">Example Sheet 2</div>
<svg style="left:320px;top:911px" width="10" height="6" viewBox="0 0 10 6"><path d="M0.7 0.8L5 5L9.3 0.8" stroke="#555" stroke-width="1.9" fill="none"/></svg>
<svg style="left:1698px;top:912px" width="6" height="10" viewBox="0 0 6 10"><path d="M6 0V10L0 5Z" fill="#9aa4ae"/></svg>
<svg style="left:1738px;top:912px" width="6" height="10" viewBox="0 0 6 10"><path d="M0 0V10L6 5Z" fill="#9aa4ae"/></svg>
<svg style="left:1772px;top:910px" width="20" height="16" viewBox="0 0 20 16"><path d="M3 7.4V2.5Q3 0.5 5 0.5H14.3Q16.3 0.5 16.3 2.5V7.4H3Z M0.2 7.4H9V11.7H0.2Z" fill="#546878"/><circle cx="12" cy="8.6" r="5.6" fill="#eeeeee"/><circle cx="12" cy="8.6" r="3.6" fill="none" stroke="#546878" stroke-width="1.4"/><path d="M14.6 11.2L17.6 14.4" stroke="#546878" stroke-width="1.9" stroke-linecap="round"/><path d="M18.6 8.3V11.6" stroke="#546878" stroke-width="1.2" stroke-linecap="round"/></svg>
<svg style="left:1813px;top:909px" width="16" height="16" viewBox="0 0 16 16"><circle cx="8" cy="8" r="3.9" fill="none" stroke="#546878" stroke-width="2.0"/><rect x="6.45" y="0.1" width="3.1" height="4.4" rx="0.9" fill="#546878" transform="rotate(0 8 8)"/><rect x="6.45" y="0.1" width="3.1" height="4.4" rx="0.9" fill="#546878" transform="rotate(45 8 8)"/><rect x="6.45" y="0.1" width="3.1" height="4.4" rx="0.9" fill="#546878" transform="rotate(90 8 8)"/><rect x="6.45" y="0.1" width="3.1" height="4.4" rx="0.9" fill="#546878" transform="rotate(135 8 8)"/><rect x="6.45" y="0.1" width="3.1" height="4.4" rx="0.9" fill="#546878" transform="rotate(180 8 8)"/><rect x="6.45" y="0.1" width="3.1" height="4.4" rx="0.9" fill="#546878" transform="rotate(225 8 8)"/><rect x="6.45" y="0.1" width="3.1" height="4.4" rx="0.9" fill="#546878" transform="rotate(270 8 8)"/><rect x="6.45" y="0.1" width="3.1" height="4.4" rx="0.9" fill="#546878" transform="rotate(315 8 8)"/></svg>
</body></html>
